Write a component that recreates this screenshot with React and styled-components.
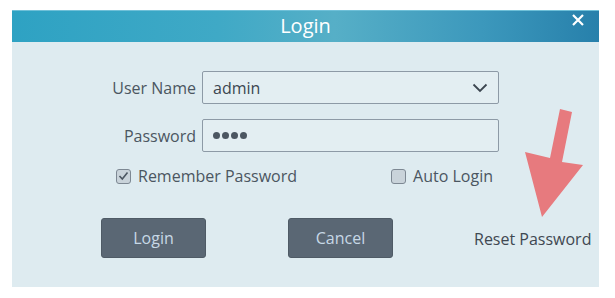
import React from 'react';
import styled, { createGlobalStyle } from 'styled-components';

const GlobalStyle = createGlobalStyle`
  html, body {
    margin: 0;
    padding: 0;
    background: #ffffff;
  }
  body {
    font-family: 'Open Sans', 'Noto Sans', sans-serif;
  }
`;

const Page = styled.div`
  width: 615px;
  height: 298px;
  padding: 10px 0 0 12px;
  box-sizing: border-box;
  position: relative;
`;

const Dialog = styled.div`
  width: 587px;
  height: 277px;
  background: #deebf0;
  display: flex;
  flex-direction: column;
`;

const TitleBar = styled.div`
  height: 32px;
  flex-shrink: 0;
  background: linear-gradient(90deg, #2ea2c3 0%, #3fa9c6 35%, #56afc7 55%, #3c98bc 80%, #2780ab 100%);
  border-top: 1px solid #6fc0d8;
  box-sizing: border-box;
  display: flex;
  align-items: center;
  justify-content: center;
  position: relative;
`;

const Title = styled.span`
  color: #ffffff;
  font-size: 20px;
  line-height: 1;
  margin-top: -2px;
`;

const Close = styled.svg`
  position: absolute;
  right: 15px;
  top: 3px;
`;

const Body = styled.div`
  flex: 1;
  display: flex;
  flex-direction: column;
  padding-top: 29px;
`;

const Form = styled.div`
  display: grid;
  grid-template-columns: 184px 297px;
  column-gap: 6px;
  row-gap: 15px;
  align-items: center;
`;

const Label = styled.label`
  text-align: right;
  color: #4b5661;
  font-size: 16px;
`;

const Field = styled.div`
  height: 33px;
  box-sizing: border-box;
  border: 1px solid #8d9aa6;
  border-radius: 2px;
  background: #e3eef2;
  display: flex;
  align-items: center;
  padding: 0 10px 0 10px;
  color: #3c4650;
  font-size: 16px;
`;

const FieldText = styled.span`
  flex: 1;
`;

const Dots = styled.span`
  flex: 1;
  display: flex;
  gap: 2px;
`;

const Dot = styled.span`
  width: 7px;
  height: 7px;
  border-radius: 50%;
  background: #4b5661;
`;

const Options = styled.div`
  display: flex;
  align-items: center;
  margin-top: 15px;
  padding-left: 104px;
  height: 18px;
`;

const Check = styled.div`
  display: flex;
  align-items: center;
  gap: 7px;
  color: #4b5661;
  font-size: 16px;
  margin-right: ${p => p.$space || 0}px;
`;

const Box = styled.span`
  width: 15px;
  height: 15px;
  box-sizing: border-box;
  border: 1px solid #7d8893;
  border-radius: 3px;
  background: #c9d3da;
  display: flex;
  align-items: center;
  justify-content: center;
`;

const Buttons = styled.div`
  display: flex;
  align-items: center;
  margin-top: 33px;
  padding-left: 89px;
`;

const Button = styled.button`
  width: 105px;
  height: 40px;
  border: 1px solid #4f5b66;
  border-radius: 3px;
  background: #5a6774;
  color: #c7d8e6;
  font-family: inherit;
  font-size: 16px;
  margin-right: ${p => p.$space || 0}px;
  padding: 0;
`;

const ResetLink = styled.span`
  color: #3f4852;
  font-size: 16px;
  margin-top: 1px;
  margin-left: -1px;
`;

const Arrow = styled.svg`
  position: absolute;
  left: 0;
  top: 0;
  pointer-events: none;
`;

export default function App() {
  return (
    <>
      <GlobalStyle />
      <Page>
        <Dialog>
          <TitleBar>
            <Title>Login</Title>
            <Close width="12" height="12" viewBox="0 0 12 12">
              <path d="M1 1 L11 11 M11 1 L1 11" stroke="#ffffff" strokeWidth="2.2" />
            </Close>
          </TitleBar>
          <Body>
            <Form>
              <Label>User Name</Label>
              <Field>
                <FieldText>admin</FieldText>
                <svg width="16" height="10" viewBox="0 0 16 10">
                  <path d="M1.5 1.5 L8 8 L14.5 1.5" fill="none" stroke="#3c4650" strokeWidth="1.8" />
                </svg>
              </Field>
              <Label>Password</Label>
              <Field>
                <Dots>
                  <Dot /><Dot /><Dot /><Dot />
                </Dots>
              </Field>
            </Form>
            <Options>
              <Check $space={94}>
                <Box>
                  <svg width="11" height="10" viewBox="0 0 11 10">
                    <path d="M1.5 5 L4.3 8 L9.5 1.5" fill="none" stroke="#4b5661" strokeWidth="1.6" />
                  </svg>
                </Box>
                Remember Password
              </Check>
              <Check>
                <Box />
                Auto Login
              </Check>
            </Options>
            <Buttons>
              <Button $space={82}>Login</Button>
              <Button $space={82}>Cancel</Button>
              <ResetLink>Reset Password</ResetLink>
            </Buttons>
          </Body>
        </Dialog>
        <Arrow width="615" height="298" viewBox="0 0 615 298">
          <polygon
            points="560,109 572,112 562,162 583,165 542,217 525,152 550,158"
            fill="#e77a7e"
          />
        </Arrow>
      </Page>
    </>
  );
}
